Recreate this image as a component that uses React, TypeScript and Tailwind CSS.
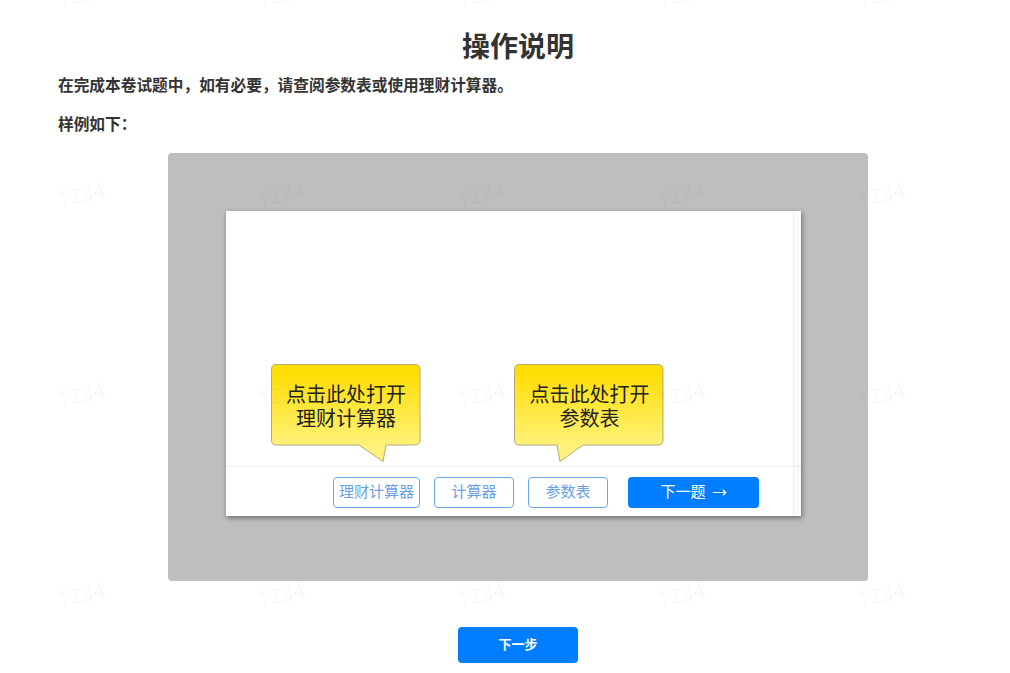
import { MoveRight } from "lucide-react"

const font = "font-['Liberation_Sans','Noto_Sans_CJK_SC',sans-serif]"

function Callout({ text, second, tail, className }: { text: string; second: string; tail: string; className: string }) {
  return (
    <div className={"absolute w-[150px] h-[98px] " + className}>
      <svg className="absolute inset-0" width="150" height="98" viewBox="0 0 150 98">
        <defs>
          <linearGradient id={"fill" + second} x1="0" y1="0" x2="0" y2="1">
            <stop offset="0" stopColor="#ffdd00" />
            <stop offset="0.1" stopColor="#ffde07" />
            <stop offset="0.85" stopColor="#fff27c" />
          </linearGradient>
        </defs>
        <path d={tail} fill={`url(#fill${second})`} stroke="#b8a878" strokeWidth="1" />
      </svg>
      <div className="relative pt-[19px] pl-[1px] text-center text-[20px] leading-[24px] text-[#222]">
        <div>{text}</div>
        <div>{second}</div>
      </div>
    </div>
  )
}

function Outline({ label, w }: { label: string; w: string }) {
  return (
    <button className={"h-[31px] rounded-[4px] border border-[#66a6ee] bg-white text-[15px] text-[#6a9fe6] " + w}>{label}</button>
  )
}

export default function App() {
  return (
    <div className={"relative h-[673px] overflow-hidden bg-white text-[#333] " + font}>
      <main className="ml-[58px] w-[920px] pt-[30px]">
        <h1 className="text-center text-[28px] leading-[36px] font-bold">操作说明</h1>
        <p className="mt-[8px] text-[15.7px] leading-[24px] font-bold">在完成本卷试题中，如有必要，请查阅参数表或使用理财计算器。</p>
        <p className="mt-[15px] text-[15.7px] leading-[24px] font-bold">样例如下：</p>

        <div className="mx-auto mt-[16px] flex h-[428px] w-[700px] justify-start rounded-[4px] bg-[#bebebe] pt-[58px] pl-[58px]">
          <div className="relative flex h-[305px] w-[575px] flex-col justify-end bg-white shadow-[1px_2px_5px_rgba(0,0,0,0.45)]">
            <div className="absolute top-0 right-0 bottom-0 w-[8px] border-l border-[#eeeeee] bg-[#fafafa]" />
            <Callout
              text="点击此处打开"
              second="理财计算器"
              className="top-[153px] left-[44.5px]"
              tail="M5 0.5 H144 Q149 0.5 149 5.5 V76 Q149 81 144 81 H115 L112 97.5 L88 81 H5 Q0.5 81 0.5 76 V5.5 Q0.5 0.5 5 0.5 Z"
            />
            <Callout
              text="点击此处打开"
              second="参数表"
              className="top-[153px] left-[288px]"
              tail="M5 0.5 H144 Q149 0.5 149 5.5 V76 Q149 81 144 81 H69 L46 97.5 L43 81 H5 Q0.5 81 0.5 76 V5.5 Q0.5 0.5 5 0.5 Z"
            />
            <div className="relative flex h-[50px] items-start border-t border-[#eeeeee] pt-[10px] pl-[107px] pr-[8px]">
              <div className="flex gap-[14px]">
                <Outline label="理财计算器" w="w-[87px]" />
                <Outline label="计算器" w="w-[80px]" />
                <Outline label="参数表" w="w-[80px]" />
              </div>
              <button className="ml-[20px] flex h-[31px] w-[131px] items-center justify-center gap-[6px] rounded-[4px] bg-[#007eff] text-[15px] text-white">
                下一题
                <MoveRight size={15} strokeWidth={1.75} />
              </button>
            </div>
          </div>
        </div>

        <div className="mt-[46px] flex justify-center">
          <button className="h-[36px] w-[120px] rounded-[4px] bg-[#007eff] text-[13px] font-bold text-white">下一步</button>
        </div>
      </main>

      {/* watermark */}
      <div className="pointer-events-none absolute top-[-105px] left-[-19px] grid grid-cols-[repeat(5,200px)] auto-rows-[200px]">
        {Array.from({ length: 20 }).map((_, i) => (
          <div key={i} className="flex items-center justify-center">
            <span className="-rotate-12 font-['Open_Sans',sans-serif] text-[21px] text-black/5">1234</span>
          </div>
        ))}
      </div>
    </div>
  )
}
